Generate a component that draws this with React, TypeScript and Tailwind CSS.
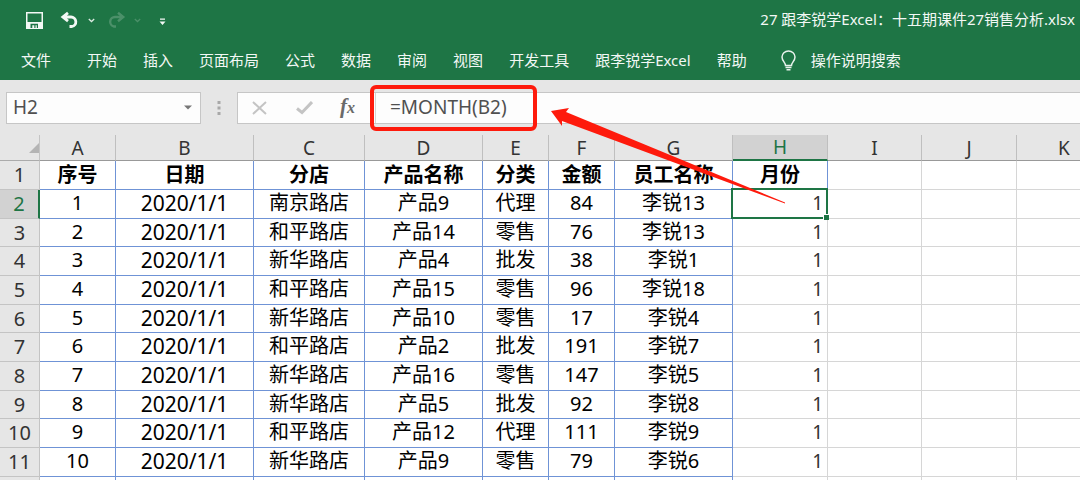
import { useState } from "react";

const TABS = ["开始", "插入", "页面布局", "公式", "数据", "审阅", "视图", "开发工具", "跟李锐学Excel", "帮助"];

const COLUMNS = [
  { letter: "A", title: "序号", width: "w-[76px]" },
  { letter: "B", title: "日期", width: "w-[138px]" },
  { letter: "C", title: "分店", width: "w-[111px]" },
  { letter: "D", title: "产品名称", width: "w-[118px]" },
  { letter: "E", title: "分类", width: "w-[66px]" },
  { letter: "F", title: "金额", width: "w-[66px]" },
  { letter: "G", title: "员工名称", width: "w-[118px]" },
  { letter: "H", title: "月份", width: "w-[95px]" },
  { letter: "I", title: "", width: "w-[94px]" },
  { letter: "J", title: "", width: "w-[95px]" },
  { letter: "K", title: "", width: "w-[95px]" },
];

const ROWS = [
  ["1", "2020/1/1", "南京路店", "产品9", "代理", "84", "李锐13", "1"],
  ["2", "2020/1/1", "和平路店", "产品14", "零售", "76", "李锐13", "1"],
  ["3", "2020/1/1", "新华路店", "产品4", "批发", "38", "李锐1", "1"],
  ["4", "2020/1/1", "和平路店", "产品15", "零售", "96", "李锐18", "1"],
  ["5", "2020/1/1", "新华路店", "产品10", "零售", "17", "李锐4", "1"],
  ["6", "2020/1/1", "和平路店", "产品2", "批发", "191", "李锐7", "1"],
  ["7", "2020/1/1", "新华路店", "产品16", "零售", "147", "李锐5", "1"],
  ["8", "2020/1/1", "新华路店", "产品5", "批发", "92", "李锐8", "1"],
  ["9", "2020/1/1", "和平路店", "产品12", "代理", "111", "李锐9", "1"],
  ["10", "2020/1/1", "新华路店", "产品9", "零售", "79", "李锐6", "1"],
  [],
];

const DATE_COL = 1;
const DATA_COLS = 7;
const SELECTED_COL = 7;
const ROW_SIZE = "h-[29px] nth-[3n]:h-7";

function TitleBar() {
  return (
    <div className="flex h-10 items-center justify-between pr-[5px] pl-[26px]">
      <div className="flex items-center">
        <button aria-label="保存" className="mr-[17px]">
          <svg width="17" height="17" viewBox="0 0 17 17" fill="#f3f8f5" fillRule="evenodd">
            <path d="M0 0h17v17H0zM1.500 1.500v8.500h14V1.500zM4.500 11.800V16h1.800v-2.800h2V16h1.200v-2.800h1.300V16h1.200v-4.200z" />
          </svg>
        </button>
        <button aria-label="撤消" className="mr-2">
          <svg width="20" height="18" viewBox="0 0 20 18" fill="none" stroke="#f3f8f5" strokeWidth="2.800">
            <path d="M8 1.800 2.800 6 8 10.200M3.500 6H11a4.800 4.800 0 0 1 1 9.500h-2.500" />
          </svg>
        </button>
        <button aria-label="撤消选项" className="mr-[11px]">
          <svg width="7" height="5" viewBox="0 0 7 5" fill="none" stroke="#dcebe2" strokeWidth="1.300">
            <path d="m.8 1 2.700 2.500L6.200 1" />
          </svg>
        </button>
        <button aria-label="恢复" className="mr-2">
          <svg width="20" height="18" viewBox="0 0 20 18" fill="none" stroke="#4b9069" strokeWidth="2.400">
            <path d="m12 1.800 5.200 4.200-5.200 4.200M16.500 6H9a4.800 4.800 0 0 0-1 9.500h2" />
          </svg>
        </button>
        <button aria-label="恢复选项" className="mr-[18px]">
          <svg width="7" height="5" viewBox="0 0 7 5" fill="none" stroke="#4b9069" strokeWidth="1.300">
            <path d="m.8 1 2.700 2.500L6.200 1" />
          </svg>
        </button>
        <button aria-label="自定义快速访问工具栏" className="pt-1">
          <svg width="7" height="8" viewBox="0 0 7 8" fill="#f3f8f5">
            <path d="M1 .5h5v1.300H1zM.5 3.500h6l-3 3.500z" />
          </svg>
        </button>
      </div>
      <h1 className="pb-0.5 text-[15px] leading-5">27 跟李锐学Excel：十五期课件27销售分析.xlsx</h1>
    </div>
  );
}

function RibbonTabs() {
  return (
    <nav className="flex h-10 items-center text-[15px] leading-5 whitespace-nowrap">
      <button className="mr-9 ml-[21px]">文件</button>
      <div className="flex gap-[26px]">
        {TABS.map((tab) => (
          <button key={tab}>{tab}</button>
        ))}
      </div>
      <button className="ml-[34px] flex items-center gap-[15px]">
        <svg width="15" height="21" viewBox="0 0 15 21" fill="none" stroke="#e8f2ec" strokeWidth="1.500">
          <path d="M4.500 15.500c0-3-3.500-4.500-3.500-8.500a6.500 6 0 0 1 13 0c0 4-3.500 5.500-3.500 8.500zM4.500 17.500h6M5.500 19.800h4" />
        </svg>
        操作说明搜索
      </button>
    </nav>
  );
}

function FormulaBar() {
  const [name, setName] = useState("H2");
  const [formula, setFormula] = useState("=MONTH(B2)");

  return (
    <div className="flex h-[55px] items-center pl-1.5 text-[19px] text-[#505050]">
      <div className="flex h-8 w-[195px] items-center border border-[#c6c6c6] bg-[#fdfdfd]">
        <input
          aria-label="名称框"
          value={name}
          onChange={(e) => setName(e.target.value)}
          className="min-w-0 flex-1 pl-1.5 outline-none"
        />
        <button aria-label="名称列表" className="mr-2">
          <svg width="8" height="5" viewBox="0 0 8 5" fill="#777">
            <path d="M0 .5h8L4 4.500z" />
          </svg>
        </button>
      </div>
      <svg width="4" height="14" viewBox="0 0 4 14" fill="#a8a8a8" className="mx-4">
        <path d="M.5 0h3v3h-3zM.5 5.500h3v3h-3zM.5 11h3v3h-3z" />
      </svg>
      <div className="relative flex h-8 flex-1 items-center border-y border-l border-[#c6c6c6] bg-[#fdfdfd]">
        <div className="flex h-full w-[138px] items-center border-r border-[#d4d4d4] pl-3.5">
          <button aria-label="取消" className="mr-[29px]">
            <svg width="15" height="14" viewBox="0 0 15 14" stroke="#c4c4c4" strokeWidth="2">
              <path d="m1 1 13 12M14 1 1 13" />
            </svg>
          </button>
          <button aria-label="输入" className="mr-[27px]">
            <svg width="17" height="14" viewBox="0 0 17 14" fill="none" stroke="#c4c4c4" strokeWidth="3">
              <path d="m1 7.500 5 4L16 1" />
            </svg>
          </button>
          <button
            aria-label="插入函数"
            className="font-['Liberation_Serif'] text-[21px] leading-5 font-bold text-[#6a6a6a] italic"
          >
            f<span className="text-base">x</span>
          </button>
        </div>
        <input
          aria-label="编辑栏"
          value={formula}
          onChange={(e) => setFormula(e.target.value)}
          className="min-w-0 flex-1 pl-3.5 outline-none"
        />
        {/* 公式高亮框 */}
        <div className="pointer-events-none absolute -top-2 left-[132px] h-[46px] w-[167px] rounded-md border-4 border-[#fe1a0c]" />
      </div>
    </div>
  );
}

function Sheet() {
  return (
    <table className="w-full table-fixed border-separate border-spacing-0 bg-white text-center text-xl leading-6 whitespace-nowrap text-black">
      <colgroup>
        <col className="w-10" />
        {COLUMNS.map((col) => (
          <col key={col.letter} className={col.width} />
        ))}
      </colgroup>
      <thead>
        <tr className="h-[26px] bg-[#e6e6e6] text-[19px] text-[#333]">
          <td className="border-r border-b border-r-[#c4c4c4] border-b-[#ababab]">
            <svg width="10" height="10" viewBox="0 0 10 10" fill="#b4b4b4" className="ml-auto">
              <path d="M10 0v10H0z" />
            </svg>
          </td>
          {COLUMNS.map((col, i) => (
            <th
              key={col.letter}
              scope="col"
              className={`border-r border-r-[#bfbfbf] font-normal ${
                i === SELECTED_COL
                  ? "border-b-2 border-b-[#1e7545] bg-[#d2d2d2] text-[#1e7545]"
                  : "border-b border-b-[#999]"
              }`}
            >
              {col.letter}
            </th>
          ))}
        </tr>
      </thead>
      <tbody>
        <tr className={ROW_SIZE}>
          <th scope="row" className="border-r border-b border-[#c4c4c4] bg-[#e6e6e6] font-normal text-[#333]">
            1
          </th>
          {COLUMNS.map((col, i) => (
            <td
              key={col.letter}
              className={`border-r border-b font-bold ${
                i < DATA_COLS
                  ? "border-[#6f93d6]"
                  : i === SELECTED_COL
                    ? "border-r-[#6f93d6] border-b-[#d6d6d6]"
                    : "border-[#d6d6d6]"
              }`}
            >
              {col.title}
            </td>
          ))}
        </tr>
        {ROWS.map((row, r) => (
          <tr key={r} className={ROW_SIZE}>
            <th
              scope="row"
              className={`border-b border-b-[#c4c4c4] font-normal ${
                r === 0
                  ? "border-r-2 border-r-[#1e7545] bg-[#d2d2d2] text-[#1e7545]"
                  : "border-r border-r-[#c4c4c4] bg-[#e6e6e6] text-[#333]"
              }`}
            >
              {row.length > 0 && r + 2}
            </th>
            {COLUMNS.map((col, i) => (
              <td
                key={col.letter}
                className={`border-r border-b pb-0.5 ${i < DATA_COLS ? "border-[#6f93d6]" : "border-[#d6d6d6]"} ${
                  i === SELECTED_COL ? "relative pr-1 text-right text-[19px] text-[#333]" : ""
                } ${i === DATE_COL ? "text-[21px]" : ""} ${r === 0 && i === SELECTED_COL ? "z-10" : ""}`}
              >
                {row[i]}
                {r === 0 && i === SELECTED_COL && (
                  <div className="absolute -top-0.5 -right-px -bottom-px -left-0.5 border-2 border-[#1e7545]">
                    <div className="absolute -right-[3px] -bottom-[3px] size-1.5 border-t border-l border-white bg-[#1e7545]" />
                  </div>
                )}
              </td>
            ))}
          </tr>
        ))}
      </tbody>
    </table>
  );
}

export default function App() {
  return (
    <div className="relative h-screen overflow-hidden bg-[#e6e6e6] font-['Noto_Sans','Noto_Sans_CJK_SC',sans-serif]">
      <header className="bg-[#1e7545] text-[#f3f8f5]">
        <TitleBar />
        <RibbonTabs />
      </header>
      <FormulaBar />
      <Sheet />
      {/* 从 H2 指向公式的箭头 */}
      <svg
        width="236"
        height="98"
        viewBox="0 0 236 98"
        fill="#fe1a0c"
        className="pointer-events-none absolute top-[106px] left-[550px] z-20"
      >
        <path d="M1 5 19 2 16 6 235 96.500 235 97.500 12 15 12 20z" />
      </svg>
    </div>
  );
}
